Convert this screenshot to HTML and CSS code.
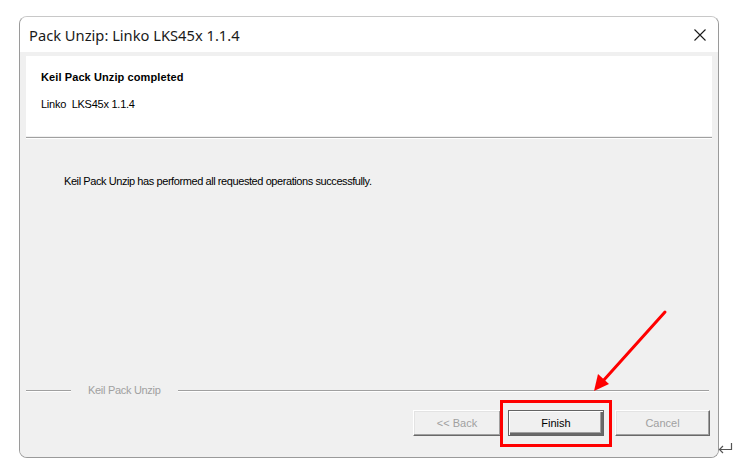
FILE: index.html
```html
<!DOCTYPE html>
<html>
<head>
<meta charset="utf-8">
<link rel="stylesheet" href="styles.css">
</head>
<body>
<div class="page">
  <div class="window">
    <div class="titlebar">
      <span class="title">Pack Unzip: Linko LKS45x 1.1.4</span>
      <svg class="close" width="12" height="12" viewBox="0 0 12 12"><path d="M0.5 0.5 L11.5 11.5 M11.5 0.5 L0.5 11.5" stroke="#1a1a1a" stroke-width="1.1" fill="none"/></svg>
    </div>
    <div class="client">
      <div class="header">
        <div class="h-title">Keil Pack Unzip completed</div>
        <div class="h-sub">Linko&nbsp; LKS45x 1.1.4</div>
      </div>
      <div class="sep"></div>
      <div class="body">
        <p class="msg">Keil Pack Unzip has performed all requested operations successfully.</p>
      </div>
      <div class="group">
        <span class="gline short"></span>
        <span class="glabel">Keil Pack Unzip</span>
        <span class="gline long"></span>
      </div>
      <div class="buttons">
        <div class="btn disabled back">&lt;&lt; Back</div>
        <div class="btn default finish">Finish</div>
        <div class="btn disabled cancel">Cancel</div>
      </div>
    </div>
  </div>
  <div class="highlight"></div>
  <svg class="arrow" width="742" height="469" viewBox="0 0 742 469">
    <line x1="665" y1="312" x2="603" y2="381" stroke="#ff0000" stroke-width="3" stroke-linecap="round"/>
    <polygon points="594,391 598,374 609,384" fill="#ff0000"/>
  </svg>
  <svg class="enter" width="18" height="16" viewBox="0 0 18 16">
    <path d="M14.5 2 V8.5 H2.5 M6 5 L2.5 8.5 L6 12" stroke="#555" stroke-width="1.2" fill="none"/>
  </svg>
</div>
</body>
</html>
```
FILE: styles.css
```css
* { box-sizing: border-box; }
html, body { margin: 0; padding: 0; background: #ffffff; }
.page {
  position: relative;
  width: 742px;
  height: 469px;
  overflow: hidden;
  padding: 16px 0 0 19px;
  font-family: "Liberation Sans", Arial, sans-serif;
}
.window {
  width: 700px;
  height: 442px;
  border: 1px solid #9a9a9a;
  border-top-color: #c8c8c8;
  border-radius: 8px;
  background: #f0f0f0;
  display: flex;
  flex-direction: column;
  overflow: hidden;
}
.titlebar {
  height: 35px;
  background: #ffffff;
  display: flex;
  align-items: center;
  padding: 0 12px 0 9px;
  flex: none;
}
.title {
  flex: 1;
  font-family: "Noto Sans", "Open Sans", sans-serif;
  font-size: 14.7px;
  color: #1a1a1a;
  padding-top: 1px;
}
.close { margin-top: 1px; }
.client {
  flex: 1;
  display: flex;
  flex-direction: column;
  background: #f0f0f0;
}
.header {
  margin: 4px 6px 0 6px;
  height: 80px;
  background: #ffffff;
  padding: 15px 0 0 15px;
  font-size: 11px;
  color: #000;
}
.h-title { font-weight: bold; line-height: 13px; letter-spacing: 0.1px; }
.h-sub { margin-top: 14px; line-height: 13px; letter-spacing: -0.25px; }
.sep {
  margin: 1px 6px 0 6px;
  height: 2px;
  border-top: 1px solid #a0a0a0;
  border-bottom: 1px solid #ffffff;
}
.body {
  flex: 1;
  padding: 36px 0 0 44px;
}
.msg {
  margin: 0;
  font-size: 11px;
  line-height: 13px;
  color: #000;
  letter-spacing: -0.42px;
}
.group {
  display: flex;
  align-items: center;
  height: 13px;
  padding: 0 9px 0 6px;
}
.gline {
  height: 2px;
  border-top: 1px solid #a0a0a0;
  border-bottom: 1px solid #ffffff;
}
.gline.short { width: 45px; }
.gline.long { flex: 1; }
.glabel {
  margin: 0 17px;
  font-size: 11px;
  color: #a0a0a0;
  line-height: 13px;
  letter-spacing: -0.3px;
}
.buttons {
  display: flex;
  justify-content: flex-end;
  padding: 13px 8px 21px 0;
}
.btn {
  height: 26px;
  display: flex;
  align-items: center;
  justify-content: center;
  font-size: 11px;
  background: #f0f0f0;
  border: 1px solid;
  border-color: #ffffff #696969 #696969 #ffffff;
  box-shadow: inset -1px -1px 0 #a0a0a0, inset 1px 1px 0 #e3e3e3;
}
.btn.disabled { color: #a0a0a0; }
.btn.back { width: 88px; margin-right: 7px; }
.btn.finish { width: 96px; margin-right: 11px; color: #000;
  border: 1px solid #646464;
  box-shadow: inset 1px 1px 0 #ffffff, inset -2px -2px 0 #696969, inset -3px -3px 0 #a0a0a0;
}
.btn.cancel { width: 95px; }
.highlight {
  position: absolute;
  left: 500px;
  top: 400px;
  width: 112px;
  height: 47px;
  border: 3px solid #ff0000;
}
.arrow { position: absolute; left: 0; top: 0; }
.enter { position: absolute; left: 717px; top: 441px; }
```
